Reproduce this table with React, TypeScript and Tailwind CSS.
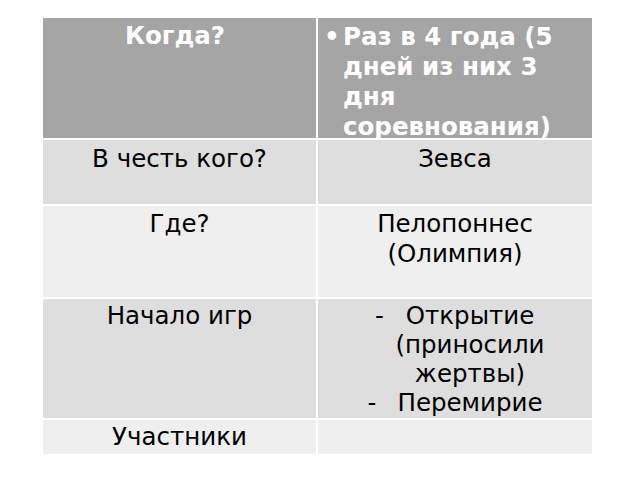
const font = { fontFamily: '"DejaVu Sans", "Noto Sans", sans-serif' };

function Dash({ gap }: { gap: string }) {
  // zero-width marker that hangs to the left of a centred line
  return (
    <span className="inline-flex w-0 justify-end">
      <span className={gap}>-</span>
    </span>
  );
}

export default function App() {
  return (
    <div className="w-[640px] h-[480px] bg-white pt-[18px] pl-[43px]" style={font}>
      <div className="grid w-[549px] grid-cols-[273px_274px] grid-rows-[120px_64px_91px_119px_34px] gap-x-[2px] gap-y-[2px] text-[24.5px] leading-[30px] text-black">
        {/* header */}
        <div className="bg-[#a5a5a5] pt-[3px] pr-[9px] text-center font-bold text-white">Когда?</div>
        <div className="bg-[#a5a5a5] pt-[4px] pl-[6px] pr-[4px] font-bold text-white">
          <div className="flex">
            <span className="w-[19px] shrink-0">•</span>
            <span>Раз в 4 года (5 дней из них 3 дня соревнования)</span>
          </div>
        </div>

        <div className="bg-[#dedede] pt-[4px] text-center">В честь кого?</div>
        <div className="bg-[#dedede] pt-[4px] text-center">Зевса</div>

        <div className="bg-[#efefef] pt-[3px] text-center">Где?</div>
        <div className="bg-[#efefef] pt-[3px] text-center">Пелопоннес (Олимпия)</div>

        <div className="bg-[#dedede] pt-[2px] text-center">Начало игр</div>
        <div className="bg-[#dedede] pt-[2px] pl-[50px] pr-[20px] text-center leading-[29px]">
          <div>
            <Dash gap="pr-[22px]" />
            Открытие (приносили жертвы)
          </div>
          <div>
            <Dash gap="pr-[21px]" />
            Перемирие
          </div>
        </div>

        <div className="bg-[#efefef] pt-[2px] text-center">Участники</div>
        <div className="bg-[#efefef]" />
      </div>
    </div>
  );
}
